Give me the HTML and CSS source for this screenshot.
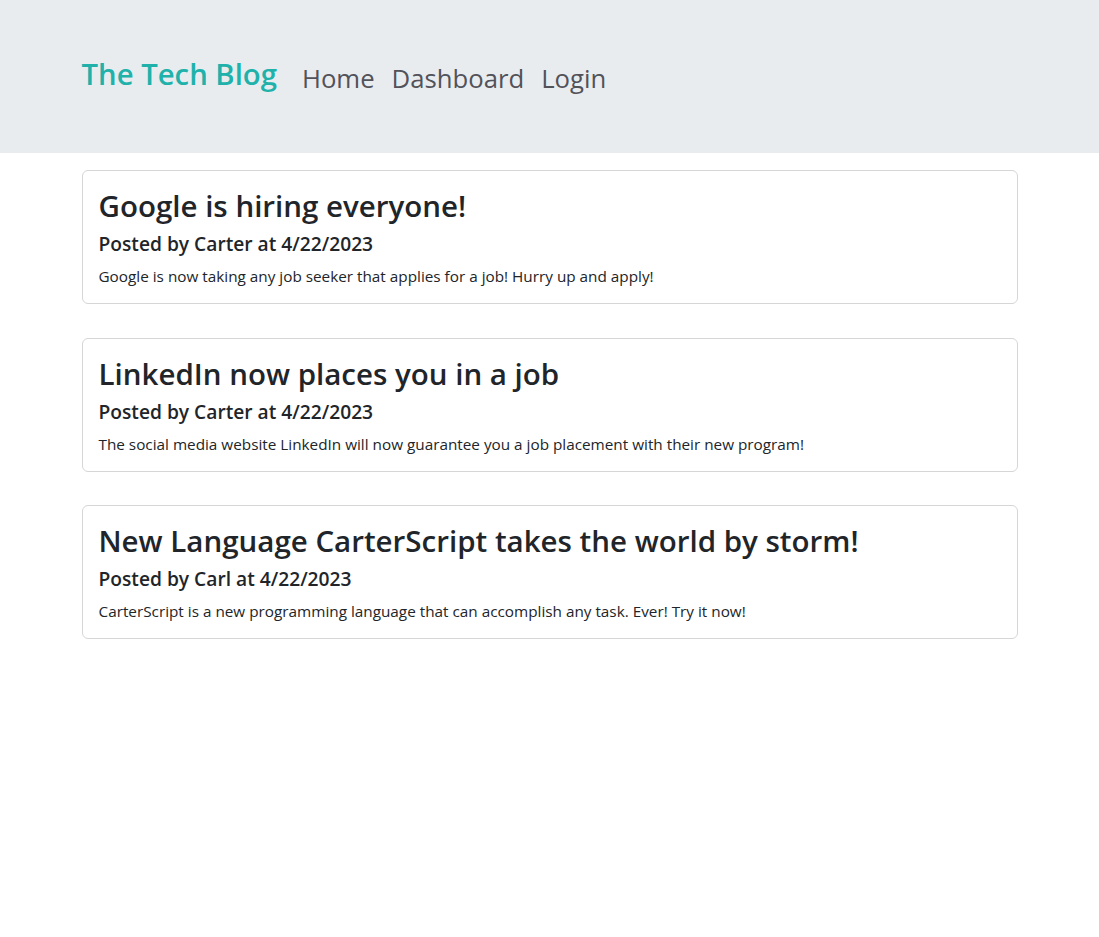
FILE: index.html
```html
<!DOCTYPE html>
<html lang="en">
<head>
<meta charset="utf-8">
<title>The Tech Blog</title>
<link rel="stylesheet" href="styles.css">
</head>
<body>
<header class="site-header">
  <div class="container header-inner">
    <a class="brand" href="#">The Tech Blog</a>
    <nav class="nav">
      <a class="nav-link" href="#">Home</a>
      <a class="nav-link" href="#">Dashboard</a>
      <a class="nav-link" href="#">Login</a>
    </nav>
  </div>
</header>
<main class="container posts">
  <article class="card">
    <h2 class="card-title">Google is hiring everyone!</h2>
    <h5 class="card-meta">Posted by Carter at 4/22/2023</h5>
    <p class="card-text">Google is now taking any job seeker that applies for a job! Hurry up and apply!</p>
  </article>
  <article class="card">
    <h2 class="card-title">LinkedIn now places you in a job</h2>
    <h5 class="card-meta">Posted by Carter at 4/22/2023</h5>
    <p class="card-text">The social media website LinkedIn will now guarantee you a job placement with their new program!</p>
  </article>
  <article class="card">
    <h2 class="card-title">New Language CarterScript takes the world by storm!</h2>
    <h5 class="card-meta">Posted by Carl at 4/22/2023</h5>
    <p class="card-text">CarterScript is a new programming language that can accomplish any task. Ever! Try it now!</p>
  </article>
</main>
</body>
</html>
```
FILE: styles.css
```css
* { box-sizing: border-box; }
body {
  margin: 0;
  font-family: "Open Sans", "Noto Sans", sans-serif;
  color: #212529;
  background: #fff;
}
.container {
  width: 960px;
  margin: 0 auto;
  padding: 0 12px;
}
.site-header {
  background: #e9ecef;
  height: 153px;
}
.header-inner {
  display: flex;
  align-items: flex-start;
  padding-top: 52px;
}
.brand {
  color: #20b2aa;
  text-decoration: none;
  font-size: 29.3px;
  font-weight: 600;
  line-height: 44px;
  margin-right: 25px;
}
.nav {
  display: flex;
  gap: 17px;
  padding-top: 9px;
}
.nav-link {
  color: #52525a;
  text-decoration: none;
  font-size: 25.7px;
  line-height: 36px;
}
.posts {
  padding-top: 17px;
  display: flex;
  flex-direction: column;
  gap: 33.5px;
}
.card {
  border: 1px solid #d6d6d6;
  border-radius: 6px;
  padding: 16px 16px 15px;
}
.card-title {
  margin: 0 0 7px;
  font-size: 29.5px;
  font-weight: 600;
  line-height: 38px;
}
.card-meta {
  margin: 0 0 8px;
  font-size: 19.2px;
  font-weight: 600;
  line-height: 24px;
}
.card-text {
  margin: 0;
  font-size: 15.3px;
  line-height: 24px;
}
```
